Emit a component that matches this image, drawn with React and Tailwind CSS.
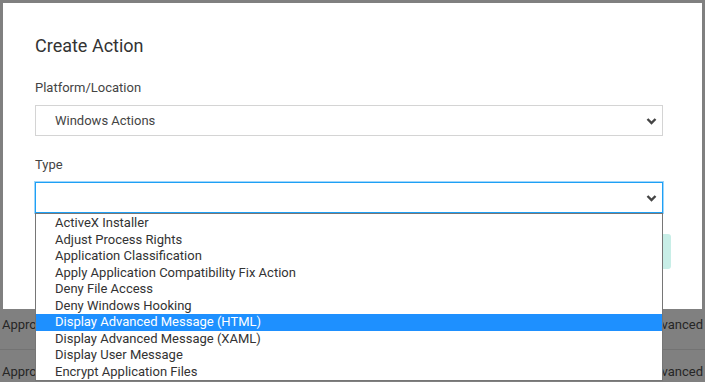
import React from "react";

const types = [
  "ActiveX Installer",
  "Adjust Process Rights",
  "Application Classification",
  "Apply Application Compatibility Fix Action",
  "Deny File Access",
  "Deny Windows Hooking",
  "Display Advanced Message (HTML)",
  "Display Advanced Message (XAML)",
  "Display User Message",
  "Encrypt Application Files",
];

const Chevron = () => (
  <svg width="11" height="8" viewBox="0 0 11 8" className="shrink-0">
    <polyline points="1.5,2 5.5,6 9.5,2" fill="none" stroke="#444" strokeWidth="2.4" />
  </svg>
);

const App = () => {
  const selected = 6;

  return (
    <div
      className="relative w-[705px] h-[382px] overflow-hidden bg-[#808080]"
      style={{ fontFamily: "Roboto, 'Noto Sans', sans-serif" }}
    >
      {/* page behind the overlay */}
      <div className="h-[309px]" />
      <div className="h-[41px] flex justify-between items-start pt-[6px] pl-[2px] pr-[2px] border-b border-[#737373] text-[13px] text-[#262626]">
        <span>Approve</span>
        <span>Advanced</span>
      </div>
      <div className="h-[32px] flex justify-between items-start pt-[12px] pl-[2px] pr-[2px] text-[13px] text-[#262626]">
        <span>Approve</span>
        <span>Advanced</span>
      </div>

      {/* modal */}
      <div className="absolute top-[3px] left-[3px] w-[699px] h-[306px] bg-white px-[32px] pt-[31px]">
        <h1 className="text-[18px] leading-[24px] text-[#333] mb-[21px]">Create Action</h1>

        <label className="block text-[13px] leading-[18px] text-[#444] mb-[8px]">Platform/Location</label>
        <div className="h-[31px] w-[628px] border border-[#d4d4d4] flex items-center justify-between pl-[19px] pr-[5px] text-[13px] text-[#444]">
          <span>Windows Actions</span>
          <Chevron />
        </div>

        <label className="block mt-[20px] text-[13px] leading-[18px] text-[#444] mb-[8px]">Type</label>
        <div className="relative w-[628px]">
          <div className="h-[31px] border border-[#1ea0f5] ring-1 ring-[#9fd6fb] flex items-center justify-end pr-[5px]">
            <Chevron />
          </div>
          <ul className="absolute z-10 top-full left-0 w-[628px] bg-white border border-[#767676] pt-[1px] text-[13px] text-[#333]">
            {types.map((t, i) => (
              <li
                key={t}
                className={`h-[16.5px] leading-[16.5px] pl-[19px] whitespace-nowrap ${
                  i === selected ? "bg-[#1e90ff] text-white" : ""
                }`}
              >
                {t}
              </li>
            ))}
          </ul>
        </div>

        <div className="mt-[21px] flex justify-end mr-[-1px]">
          <button className="h-[35px] w-[110px] rounded-[3px] bg-[#c8eee7] text-white text-[13px]">
            Save
          </button>
        </div>
      </div>
    </div>
  );
};

export default App;
